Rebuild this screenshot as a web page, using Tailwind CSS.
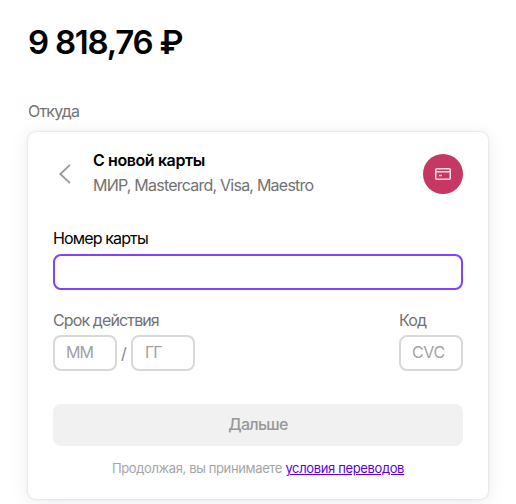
<!DOCTYPE html>
<html lang="ru">
<head>
<meta charset="utf-8">
<title>Перевод</title>
<script src="https://cdn.jsdelivr.net/npm/@tailwindcss/browser@4"></script>
</head>
<body class="h-[504px] overflow-hidden bg-white pl-7 font-[Inter,'Liberation_Sans',sans-serif] text-base leading-6 text-[#727272]">
<main class="w-[460px] pt-[22px]">
  <h1 class="h-10 text-[33px] leading-10 font-semibold whitespace-nowrap text-black"><span class="tracking-[-1.25px]">9 818,76 ₽</span></h1>
  <p class="mt-[37px] h-[25px]"><span class="tracking-[-0.8px]">Откуда</span></p>
  <section class="mt-2 h-[367px] rounded-lg bg-white px-[25px] pt-[16px] shadow-[0_0_3px_rgba(25,25,60,0.16),0_3px_20px_rgba(25,25,60,0.08)]">
    <header class="flex h-[50px] items-start">
      <svg class="mt-[15px] ml-[5px] h-[22px] w-[14px]" viewBox="0 0 14 22" fill="none" stroke="#9b9b9b" stroke-width="1.9"><path d="M12 1.9 2.3 11 12 20.1"/></svg>
      <div class="ml-[21px] flex-1 whitespace-nowrap">
        <h2 class="h-[25px] font-semibold text-black"><span class="tracking-[-0.4px]">С новой карты</span></h2>
        <p><span class="tracking-[-0.77px]">МИР, Mastercard, Visa, Maestro</span></p>
      </div>
      <div class="mt-[6px] flex size-10 items-center justify-center rounded-full bg-[#c63863]">
        <svg class="h-[12px] w-[16px]" viewBox="0 0 16 12" fill="none" stroke="#fbdfe8" stroke-width="1.5"><rect x=".75" y=".75" width="14.5" height="10.5" rx="1"/><path d="M1 3.7h14M4 7.5h3"/></svg>
      </div>
    </header>
    <label class="mt-[28px] block h-[28px] text-black"><span class="tracking-[-0.87px]">Номер карты</span></label>
    <div class="h-9 rounded-lg border-2 border-[#8340ff]"></div>
    <div class="mt-[18px] flex justify-between">
      <div>
        <div class="h-[27px]"><span class="tracking-[-0.88px]">Срок действия</span></div>
        <div class="flex items-center text-[#a2a2a2]">
          <div class="h-9 w-16 rounded-lg border-2 border-[#d8d8d8] pl-[11px] leading-[30px] tracking-[-1px]">ММ</div>
          <span class="w-[14px] text-center text-[#858585]">/</span>
          <div class="h-9 w-16 rounded-lg border-2 border-[#d8d8d8] pl-[12px] leading-[30px] tracking-[-1px]">ГГ</div>
        </div>
      </div>
      <div>
        <div class="h-[27px]"><span class="tracking-[-0.9px]">Код</span></div>
        <div class="h-9 w-16 rounded-lg border-2 border-[#d8d8d8] pl-[11px] leading-[30px] tracking-[-0.4px] text-[#a2a2a2]">CVC</div>
      </div>
    </div>
    <div class="mt-[33px] h-[42px] rounded-lg bg-[#f1f1f1] text-center leading-[40px] font-medium text-[#989898]"><span class="tracking-[-0.7px]">Дальше</span></div>
    <p class="mt-[12px] text-center text-[13px] leading-5 whitespace-nowrap text-[#a5a5a5]"><span class="tracking-[-0.36px]">Продолжая, вы принимаете <a class="text-[#5b00e8] underline">условия переводов</a></span></p>
  </section>
</main>
</body>
</html>
